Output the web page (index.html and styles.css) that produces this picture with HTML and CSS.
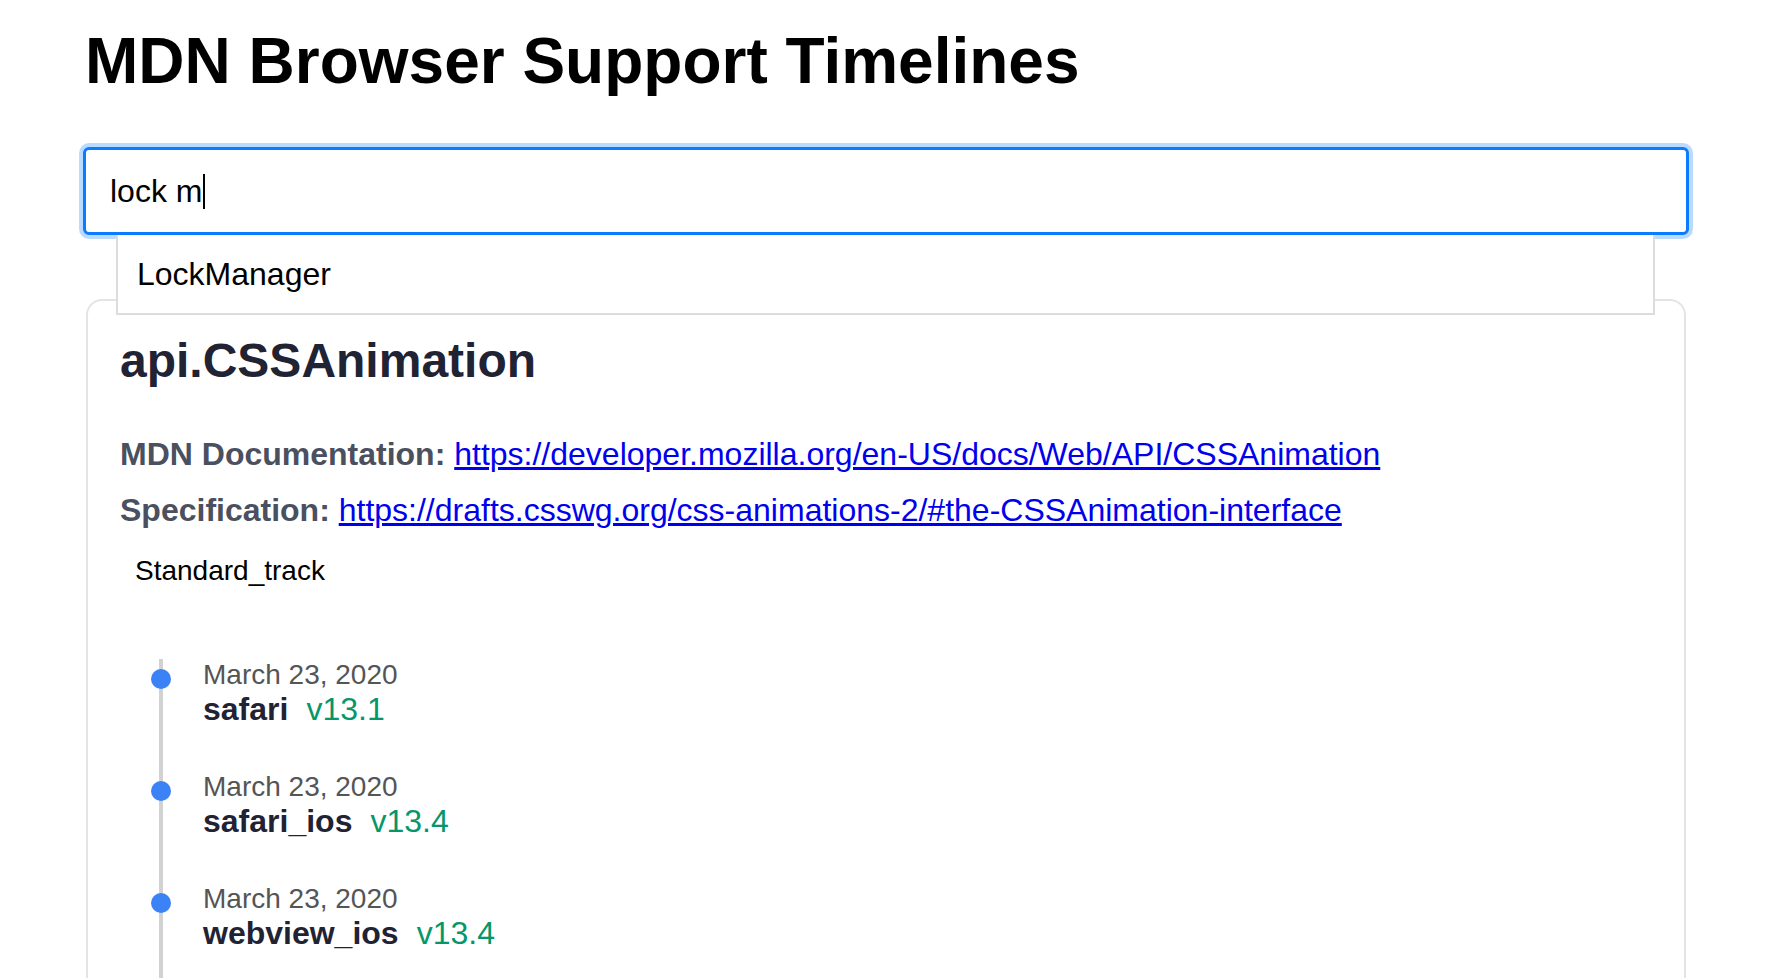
FILE: index.html
```
<!DOCTYPE html>
<html>
<head>
    <meta name="viewport" content="width=device-width, initial-scale=1.0">
    <title>MDN Browser Support Timelines</title>
    <link rel="stylesheet" href="styles.css">
</head>
<body>
    <div class="page">
        <h1 class="page-title">MDN Browser Support Timelines</h1>

        <div class="search">
            <div class="search-input">
                <span class="search-text">lock m</span><span class="caret"></span>
            </div>
            <ul class="suggestions">
                <li>LockManager</li>
            </ul>
        </div>

        <div class="feature-card">
            <h2 class="feature-name">api.CSSAnimation</h2>

            <p class="meta">
                <span class="meta-label">MDN Documentation:</span>
                <a href="https://developer.mozilla.org/en-US/docs/Web/API/CSSAnimation">https://developer.mozilla.org/en-US/docs/Web/API/CSSAnimation</a>
            </p>
            <p class="meta">
                <span class="meta-label">Specification:</span>
                <a href="https://drafts.csswg.org/css-animations-2/#the-CSSAnimation-interface">https://drafts.csswg.org/css-animations-2/#the-CSSAnimation-interface</a>
            </p>

            <ul class="status-list">
                <li>Standard_track</li>
            </ul>

            <ol class="timeline">
                <li class="timeline-item">
                    <span class="dot"></span>
                    <div class="date">March 23, 2020</div>
                    <div class="release"><span class="browser">safari</span><span class="version">v13.1</span></div>
                </li>
                <li class="timeline-item">
                    <span class="dot"></span>
                    <div class="date">March 23, 2020</div>
                    <div class="release"><span class="browser">safari_ios</span><span class="version">v13.4</span></div>
                </li>
                <li class="timeline-item">
                    <span class="dot"></span>
                    <div class="date">March 23, 2020</div>
                    <div class="release"><span class="browser">webview_ios</span><span class="version">v13.4</span></div>
                </li>
            </ol>
        </div>
    </div>
</body>
</html>
```

FILE: styles.css
```
* {
    box-sizing: border-box;
}

body {
    margin: 0;
    font-family: "Liberation Sans", Arial, sans-serif;
    background-color: #fff;
    color: #000;
}

.page {
    max-width: 1606px;
    margin: 0 auto;
    padding-top: 24px;
}

.page-title {
    margin: 0;
    padding-left: 2px;
    font-size: 64px;
    line-height: 74px;
    font-weight: bold;
}

/* search box + suggestions */
.search {
    position: relative;
    margin-top: 49px;
}

.search-input {
    display: flex;
    align-items: center;
    height: 88px;
    padding: 0 24px;
    border: 3px solid #0b7bff;
    border-radius: 6px;
    box-shadow: 0 0 0 4px rgba(11, 123, 255, 0.28);
    font-size: 32px;
    background-color: white;
}

.caret {
    display: inline-block;
    width: 2px;
    height: 35px;
    margin-left: 1px;
    background-color: #000;
}

.suggestions {
    position: absolute;
    top: 100%;
    left: 33px;
    right: 34px;
    margin: 0;
    padding: 0;
    list-style: none;
    background-color: white;
    border: 2px solid #dcdcdc;
    border-top: none;
    z-index: 2;
}

.suggestions li {
    height: 78px;
    line-height: 78px;
    padding: 0 19px;
    font-size: 32px;
}

/* feature card */
.feature-card {
    margin: 64px 3px 0;
    padding: 32px;
    border: 2px solid #e4e4e4;
    border-radius: 16px;
}

.feature-name {
    margin: 0 0 48px;
    font-size: 48px;
    line-height: 55px;
    color: #1f2333;
}

.meta {
    margin: 0 0 19px;
    font-size: 32px;
    line-height: 37px;
}

.meta-label {
    font-weight: bold;
    color: #4a5060;
}

.meta a {
    color: #0000ee;
}

.status-list {
    margin: 26px 0 0;
    padding-left: 15px;
    list-style: none;
    font-size: 28px;
    line-height: 32px;
}

/* timeline */
.timeline {
    margin: 72px 0 0 39px;
    padding: 0 0 0 40px;
    list-style: none;
    border-left: 4px solid #d2d2d2;
}

.timeline-item {
    position: relative;
    padding-bottom: 43px;
}

.dot {
    position: absolute;
    left: -52px;
    top: 10px;
    width: 20px;
    height: 20px;
    border-radius: 50%;
    background-color: #3b82f6;
}

.date {
    font-size: 28px;
    line-height: 32px;
    color: #555;
}

.release {
    font-size: 32px;
    line-height: 37px;
}

.browser {
    font-weight: bold;
    color: #1f2333;
}

.version {
    margin-left: 18px;
    color: #059669;
}
```
